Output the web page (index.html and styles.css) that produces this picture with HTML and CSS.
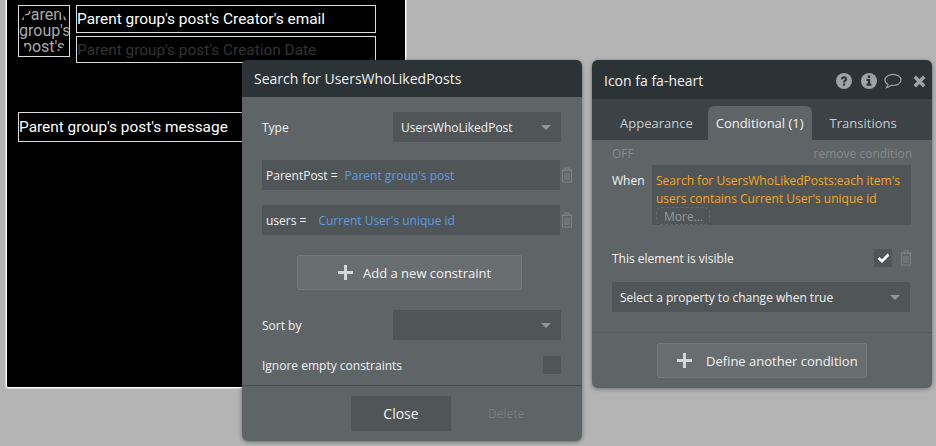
FILE: index.html
```html
<!DOCTYPE html>
<html>
<head>
<title>Search for UsersWhoLikedPosts</title>
<link rel="stylesheet" href="styles.css">
</head>
<body>
<svg class="icon-defs" width="0" height="0">
  <symbol id="trash" viewBox="0 0 12 16">
    <path d="M4 2.500V1h4v1.500M.5 3h11M1.500 3.500h9V15h-9zM4 6v7M6 6v7M8 6v7" fill="none" stroke="currentColor" stroke-width="1.200"/>
  </symbol>
  <symbol id="plus" viewBox="0 0 15 15">
    <path d="M6 0h3v6h6v3H9v6H6V9H0V6h6z" fill="currentColor"/>
  </symbol>
</svg>

<div class="canvas">
  <div class="canvas-row">
    <div class="pic-box"><div class="pic-text">Parent group's post's</div></div>
    <div class="canvas-col">
      <div class="text-box email">Parent group's post's Creator's email</div>
      <div class="text-box date">Parent group's post's Creation Date</div>
    </div>
  </div>
  <div class="text-box message">Parent group's post's message</div>
</div>

<div class="panel search-panel">
  <div class="panel-head">Search for UsersWhoLikedPosts</div>
  <div class="search-body">
    <div class="field-row">
      <span>Type</span>
      <div class="select wide">UsersWhoLikedPost<i class="caret"></i></div>
    </div>
    <div class="constraint-row first">
      <div class="constraint"><span class="key">ParentPost =</span><span class="val">Parent group's post</span></div>
      <svg class="trash"><use href="#trash"/></svg>
    </div>
    <div class="constraint-row">
      <div class="constraint"><span class="key users">users =</span><span class="val">Current User's unique id</span></div>
      <svg class="trash"><use href="#trash"/></svg>
    </div>
    <div class="add-btn constraint-btn"><svg class="plus"><use href="#plus"/></svg>Add a new constraint</div>
    <div class="field-row sort">
      <span>Sort by</span>
      <div class="select wide"><i class="caret"></i></div>
    </div>
    <div class="field-row ignore">
      <span>Ignore empty constraints</span>
      <div class="check"></div>
    </div>
  </div>
  <div class="search-foot">
    <div class="close-btn">Close</div>
    <div class="delete-btn">Delete</div>
  </div>
</div>

<div class="panel prop-panel">
  <div class="panel-head prop-head">
    <span>Icon fa fa-heart</span>
    <div class="head-icons">
      <svg width="16" height="16" viewBox="0 0 18 18"><circle cx="9" cy="9" r="9" fill="#9aa3a6"/><path d="M5.500 7c0-4.500 7-4.500 7 0 0 2.300-2.400 2.300-2.400 3.700H7.900C7.900 8 10.200 8 10.200 7c0-1.500-2.400-1.500-2.400 0.300z" fill="#2b3336"/><rect x="7.900" y="11.800" width="2.200" height="2.400" fill="#2b3336"/></svg>
      <svg class="info" width="16" height="16" viewBox="0 0 18 18"><circle cx="9" cy="9" r="9" fill="#9aa3a6"/><rect x="7.600" y="2.800" width="2.800" height="2.600" fill="#2b3336"/><path d="M6.200 6.800h4.200v5.400h1.300v2.200H6.200v-2.200h1.400V9H6.200z" fill="#2b3336"/></svg>
      <svg class="bubble" width="18" height="17" viewBox="0 0 19 17"><path d="M9.500 1C5 1 1 3.500 1 7c0 2 1.300 3.600 3.200 4.600-.2 1.300-.9 2.500-1.500 3.400 1.800-.4 3.600-1.400 4.800-2.500.6.100 1.300.1 2 .1 4.500 0 8.500-2.300 8.500-5.600S14 1 9.500 1z" fill="none" stroke="#9aa3a6" stroke-width="1.200"/></svg>
      <svg class="cross" width="13" height="13" viewBox="0 0 13 13"><path d="M3 .5l3.500 3.500L10 .5l2.500 2.500L9 6.500l3.500 3.500-2.500 2.500L6.500 9 3 12.500.5 10 4 6.500.5 3z" fill="#9aa3a6"/></svg>
    </div>
  </div>
  <div class="tabs">
    <div class="tab">Appearance</div>
    <div class="tab active">Conditional (1)</div>
    <div class="tab">Transitions</div>
  </div>
  <div class="cond">
    <div class="cond-top"><span>OFF</span><span>remove condition</span></div>
    <div class="when-row">
      <span class="when">When</span>
      <div class="expr">
        <div class="expr-text">Search for UsersWhoLikedPosts:each item's users contains Current User's unique id</div>
        <span class="more">More...</span>
      </div>
    </div>
    <div class="visible-row">
      <span>This element is visible</span>
      <div class="visible-ctl">
        <div class="check on"><svg width="13" height="10" viewBox="0 0 13 10"><path d="M1.500 5l3.500 3.200L11.500 1.500" fill="none" stroke="#fff" stroke-width="2.600"/></svg></div>
        <svg class="trash"><use href="#trash"/></svg>
      </div>
    </div>
    <div class="select full">Select a property to change when true<i class="caret"></i></div>
  </div>
  <div class="prop-foot">
    <div class="add-btn condition-btn"><svg class="plus"><use href="#plus"/></svg>Define another condition</div>
  </div>
</div>
</body>
</html>
```

FILE: styles.css
```css
html, body {
    margin: 0;
    padding: 0;
}

body {
    width: 936px;
    height: 446px;
    overflow: hidden;
    position: relative;
    background-color: #b4b4b4;
    font-family: "Open Sans", sans-serif;
    font-size: 12px;
    color: #f2f2f2;
}

.icon-defs {
    position: absolute;
}

/* page canvas behind the panels */
.canvas {
    position: absolute;
    left: 6px;
    top: -1px;
    width: 400px;
    height: 389px;
    box-sizing: border-box;
    padding: 5px 0 0 11px;
    background-color: #000;
    border: 1px solid #fff;
    box-shadow: 0 0 0 1px #d4d4d4;
    border-radius: 0 0 2px 2px;
    font-family: Roboto, sans-serif;
    font-size: 15.4px;
    color: #fff;
}

.canvas-row {
    display: flex;
    gap: 6px;
}

.canvas-col {
    display: flex;
    flex-direction: column;
    gap: 3px;
}

.pic-box {
    width: 52px;
    height: 52px;
    box-sizing: border-box;
    border: 1px solid #ddd;
}

/* the picture is round, so the corners of the text get cut */
.pic-text {
    width: 50px;
    height: 50px;
    padding-top: 1px;
    box-sizing: border-box;
    border-radius: 50%;
    overflow: hidden;
    text-align: center;
    font-size: 16px;
    line-height: 16px;
    color: #aaa;
}

.text-box {
    box-sizing: border-box;
    border: 1px solid #ddd;
    width: 300px;
    white-space: nowrap;
}

.email {
    height: 28px;
    line-height: 26px;
}

.date {
    height: 27px;
    line-height: 26px;
    color: #333;
}

.message {
    width: 360px;
    height: 30px;
    line-height: 28px;
    margin-top: 49px;
}

/* floating panels */
.panel {
    position: absolute;
    background-color: #5f6467;
    border-radius: 6px;
    box-shadow: 0 1px 4px rgba(0,0,0,0.4);
    overflow: hidden;
}

.panel-head {
    height: 37px;
    line-height: 37px;
    padding-left: 12px;
    background-color: #2b3336;
    font-size: 14px;
}

.search-panel {
    left: 242px;
    top: 60px;
    width: 340px;
    height: 381px;
}

.search-body {
    height: 288px;
    box-sizing: border-box;
    padding: 15px 21px 0 20px;
}

.field-row {
    display: flex;
    justify-content: space-between;
    align-items: center;
}

.select {
    position: relative;
    box-sizing: border-box;
    height: 30px;
    line-height: 32px;
    padding-left: 8px;
    background-color: #505557;
}

.select.wide {
    width: 168px;
}

.select.full {
    width: 298px;
}

.caret {
    position: absolute;
    right: 10px;
    top: 13px;
    border-left: 5px solid transparent;
    border-right: 5px solid transparent;
    border-top: 5px solid #8f9598;
}

.constraint-row {
    display: flex;
    align-items: center;
    margin-top: 15px;
}

.constraint-row.first {
    margin-top: 18px;
}

.constraint {
    display: flex;
    flex-shrink: 0;
    width: 298px;
    height: 30px;
    line-height: 32px;
    padding-left: 4px;
    box-sizing: border-box;
    background-color: #505557;
}

.key {
    margin-right: 7px;
}

.key.users {
    margin-right: 12px;
}

.val {
    color: #5d9be3;
}

.trash {
    flex-shrink: 0;
    width: 12px;
    height: 16px;
    margin-left: 1px;
    color: #7b8083;
}

.add-btn {
    display: flex;
    align-items: center;
    box-sizing: border-box;
    height: 35px;
    font-size: 13px;
    background-color: #686d6f;
    border: 1px solid #74797b;
    border-radius: 2px;
}

.plus {
    width: 15px;
    height: 15px;
    color: #d4d6d7;
    margin-right: 10px;
}

.constraint-btn {
    width: 225px;
    margin: 20px 0 0 35px;
    padding-left: 40px;
}

.sort {
    margin-top: 20px;
}

.ignore {
    margin-top: 16px;
}

.check {
    width: 18px;
    height: 18px;
    background-color: #505557;
}

.search-foot {
    position: relative;
    height: 56px;
    border-top: 1px solid #46494b;
    box-sizing: border-box;
}

.close-btn {
    position: absolute;
    left: 109px;
    top: 10px;
    width: 100px;
    height: 35px;
    line-height: 35px;
    text-align: center;
    font-size: 14px;
    background-color: #505557;
}

.delete-btn {
    position: absolute;
    left: 246px;
    top: 10px;
    line-height: 35px;
    font-size: 12px;
    color: #777c7e;
}

.prop-panel {
    left: 592px;
    top: 60px;
    width: 340px;
    height: 328px;
}

.prop-head {
    height: 39px;
    line-height: 41px;
    display: flex;
    justify-content: space-between;
    padding-right: 6px;
}

.head-icons {
    display: flex;
    align-items: center;
    gap: 8px;
    padding-top: 3px;
}

.info {
    margin-left: 1px;
}

.bubble {
    margin-left: -1px;
}

.cross {
    margin-left: 3px;
}

.tabs {
    display: flex;
    height: 41px;
    padding-left: 17px;
    background-color: #3c4245;
    box-sizing: border-box;
    padding-top: 7px;
    font-size: 13px;
}

.tab {
    line-height: 34px;
    padding: 0 11px;
    color: #c9cccd;
}

.tab.active {
    background-color: #5f6467;
    color: #f2f2f2;
    border-radius: 6px 6px 0 0;
    padding: 0 8px;
    margin: 0 7px 0 4px;
}

.cond {
    height: 193px;
    box-sizing: border-box;
    padding: 7px 20px 0 20px;
    border-bottom: 1px solid #565a5d;
}

.cond-top {
    display: flex;
    justify-content: space-between;
    line-height: 14px;
    color: #868b8e;
}

.when-row {
    display: flex;
    justify-content: space-between;
    margin-top: 4px;
    padding-right: 1px;
}

.when {
    font-weight: 500;
    line-height: 32px;
}

.expr {
    width: 259px;
    height: 60px;
    box-sizing: border-box;
    padding: 7px 4px 0;
    background-color: #505557;
    line-height: 18px;
    color: #f5a623;
}

.more {
    display: block;
    box-sizing: border-box;
    width: 54px;
    height: 18px;
    margin-top: -1px;
    border: 1px dashed #666a6c;
    border-radius: 5px;
    padding-left: 7px;
    line-height: 18px;
    color: #94999b;
}

.visible-row {
    display: flex;
    justify-content: space-between;
    align-items: center;
    margin-top: 24px;
}

.visible-ctl {
    display: flex;
    align-items: center;
    gap: 7px;
}

.check.on {
    display: flex;
    align-items: center;
    justify-content: center;
}

.visible-row + .select {
    margin-top: 15px;
}

.prop-foot {
    padding: 10px 0 0 65px;
}

.condition-btn {
    width: 210px;
    padding-left: 19px;
}

.condition-btn .plus {
    margin-right: 14px;
}
```
